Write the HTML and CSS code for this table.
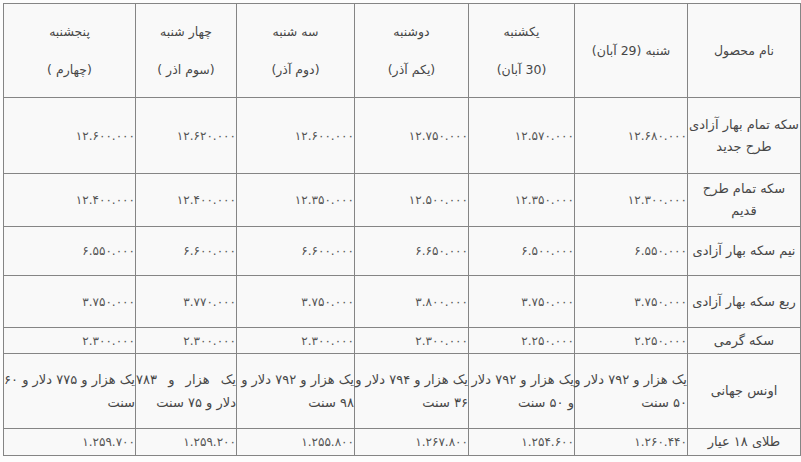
FILE: index.html
```html
<!DOCTYPE html>
<html lang="fa" dir="rtl">
<head>
<meta charset="utf-8">
<title>قیمت سکه</title>
<link rel="stylesheet" href="styles.css">
</head>
<body>
<table class="prices">
  <colgroup>
    <col class="c1"><col class="c2"><col class="c3"><col class="c4"><col class="c5"><col class="c6"><col class="c7">
  </colgroup>
  <tr class="r-head">
    <td class="head">نام محصول</td>
    <td class="head">شنبه (29 آبان)</td>
    <td class="head"><span class="hl">یکشنبه</span><span class="hl">(30 آبان)</span></td>
    <td class="head"><span class="hl">دوشنبه</span><span class="hl">(یکم آذر)</span></td>
    <td class="head"><span class="hl">سه شنبه</span><span class="hl">(دوم آذر)</span></td>
    <td class="head"><span class="hl">چهار شنبه</span><span class="hl">(سوم اذر )</span></td>
    <td class="head"><span class="hl">پنجشنبه</span><span class="hl">(چهارم )</span></td>
  </tr>
  <tr class="r1">
    <td class="name"><span class="ln">سکه تمام بهار آزادی</span><span class="ln">طرح جدید</span></td>
    <td class="num">۱۲.۶۸۰.۰۰۰</td>
    <td class="num">۱۲.۵۷۰.۰۰۰</td>
    <td class="num">۱۲.۷۵۰.۰۰۰</td>
    <td class="num">۱۲.۶۰۰.۰۰۰</td>
    <td class="num">۱۲.۶۲۰.۰۰۰</td>
    <td class="num">۱۲.۶۰۰.۰۰۰</td>
  </tr>
  <tr class="r2">
    <td class="name"><span class="ln">سکه تمام طرح</span><span class="ln">قدیم</span></td>
    <td class="num">۱۲.۳۰۰.۰۰۰</td>
    <td class="num">۱۲.۳۵۰.۰۰۰</td>
    <td class="num">۱۲.۵۰۰.۰۰۰</td>
    <td class="num">۱۲.۳۵۰.۰۰۰</td>
    <td class="num">۱۲.۴۰۰.۰۰۰</td>
    <td class="num">۱۲.۴۰۰.۰۰۰</td>
  </tr>
  <tr class="r3">
    <td class="name">نیم سکه بهار آزادی</td>
    <td class="num">۶.۵۵۰.۰۰۰</td>
    <td class="num">۶.۵۰۰.۰۰۰</td>
    <td class="num">۶.۶۵۰.۰۰۰</td>
    <td class="num">۶.۶۰۰.۰۰۰</td>
    <td class="num">۶.۶۰۰.۰۰۰</td>
    <td class="num">۶.۵۵۰.۰۰۰</td>
  </tr>
  <tr class="r4">
    <td class="name">ربع سکه بهار آزادی</td>
    <td class="num">۳.۷۵۰.۰۰۰</td>
    <td class="num">۳.۷۵۰.۰۰۰</td>
    <td class="num">۳.۸۰۰.۰۰۰</td>
    <td class="num">۳.۷۵۰.۰۰۰</td>
    <td class="num">۳.۷۷۰.۰۰۰</td>
    <td class="num">۳.۷۵۰.۰۰۰</td>
  </tr>
  <tr class="r5">
    <td class="name">سکه گرمی</td>
    <td class="num">۲.۲۵۰.۰۰۰</td>
    <td class="num">۲.۲۵۰.۰۰۰</td>
    <td class="num">۲.۳۰۰.۰۰۰</td>
    <td class="num">۲.۳۰۰.۰۰۰</td>
    <td class="num">۲.۳۰۰.۰۰۰</td>
    <td class="num">۲.۳۰۰.۰۰۰</td>
  </tr>
  <tr class="r6">
    <td class="name">اونس جهانی</td>
    <td class="txt"><span class="ln">یک هزار و ۷۹۲ دلار و</span><span class="ln">۵۰ سنت</span></td>
    <td class="txt"><span class="ln">یک هزار و ۷۹۲ دلار</span><span class="ln">و ۵۰ سنت</span></td>
    <td class="txt"><span class="ln">یک هزار و ۷۹۴ دلار و</span><span class="ln">۳۶ سنت</span></td>
    <td class="txt"><span class="ln">یک هزار و ۷۹۲ دلار و</span><span class="ln">۹۸ سنت</span></td>
    <td class="txt"><span class="ln wide">یک هزار و ۷۸۳</span><span class="ln">دلار و ۷۵ سنت</span></td>
    <td class="txt"><span class="ln">یک هزار و ۷۷۵ دلار و ۶۰</span><span class="ln">سنت</span></td>
  </tr>
  <tr class="r7">
    <td class="name">طلای ۱۸ عیار</td>
    <td class="num">۱.۲۶۰.۴۴۰</td>
    <td class="num">۱.۲۵۴.۶۰۰</td>
    <td class="num">۱.۲۶۷.۸۰۰</td>
    <td class="num">۱.۲۵۵.۸۰۰</td>
    <td class="num">۱.۲۵۹.۲۰۰</td>
    <td class="num">۱.۲۵۹.۷۰۰</td>
  </tr>
</table>
</body>
</html>
```
FILE: styles.css
```css
html, body {
  margin: 0;
  padding: 0;
  background: #fdfdfd;
}
body {
  padding: 3px 0 0 3px;
  font-family: "DejaVu Sans", "Noto Sans", sans-serif;
  color: #474747;
  font-size: 13px;
}
.prices {
  border-collapse: collapse;
  table-layout: fixed;
  width: 798px;
  background: #f9f9f9;
}
.prices td {
  border: 1px solid #858585;
  padding: 0;
  vertical-align: middle;
  overflow: visible;
}
.c1 { width: 113px; }
.c2 { width: 113px; }
.c3 { width: 106px; }
.c4 { width: 114px; }
.c5 { width: 118px; }
.c6 { width: 101px; }
.c7 { width: 132px; }

.r-head { height: 94px; }
.r1 { height: 76px; }
.r2 { height: 53px; }
.r3 { height: 49px; }
.r4 { height: 52px; }
.r5 { height: 26px; }
.r6 { height: 75px; }
.r7 { height: 27px; }

.head {
  text-align: center;
  font-size: 12.5px;
}
.hl {
  display: block;
  line-height: 38px;
}
.name {
  text-align: center;
  font-size: 13px;
  line-height: 22px;
}
.num {
  text-align: right;
  font-size: 12px;
  color: #555555;
}
.txt {
  text-align: right;
  font-size: 13px;
  line-height: 23px;
}
.ln {
  display: block;
  white-space: nowrap;
}
.wide {
  text-align: justify;
  text-align-last: justify;
}
```
